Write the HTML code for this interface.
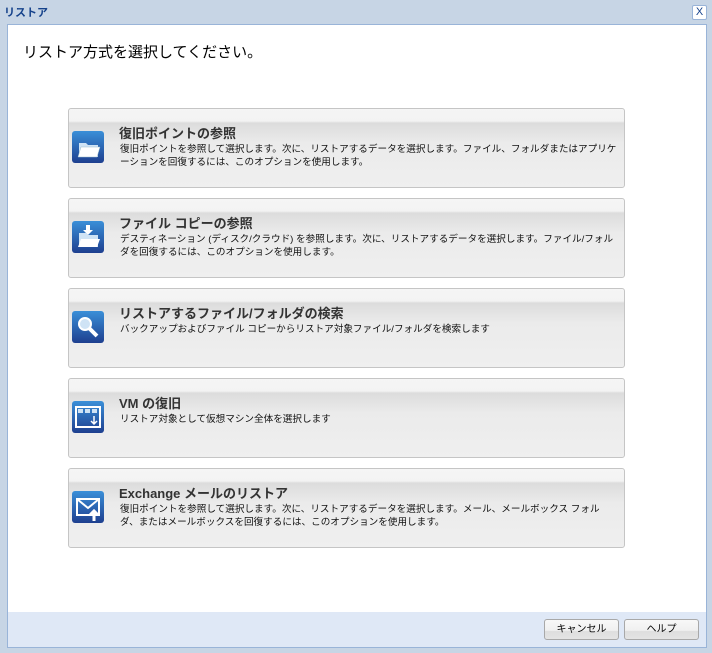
<!DOCTYPE html>
<html><head><meta charset="utf-8"><style>
*{margin:0;padding:0;box-sizing:border-box}
body{width:712px;height:653px;background:#c7d5e5;font-family:"Liberation Sans","Noto Sans CJK JP",sans-serif;position:relative;overflow:hidden}
.title{position:absolute;left:4px;top:4px;font-size:11px;font-weight:bold;color:#15428b}
.close{position:absolute;left:692px;top:5px;width:15px;height:15px;border:1px solid #99b4d8;background:#fff;color:#15428b;font-size:11px;text-align:center;line-height:13px;border-radius:2px}
.inner{position:absolute;left:7px;top:24px;width:700px;height:624px;border:1px solid #99b4d8;background:#dfe8f6}
.white{position:absolute;left:0;top:0;width:698px;height:587px;background:#fff}
.head{position:absolute;left:15px;top:16px;font-size:15px;color:#000}
.card{position:absolute;left:60px;width:557px;height:80px;border:1px solid #c5c5c5;border-radius:3px;background:linear-gradient(#f5f5f5 0,#f3f3f3 12px,#dcdcdc 14px,#ebebeb 34px,#efefef 100%)}
.icon{position:absolute;left:3px;top:22px;width:32px;height:32px;border-radius:3px;background:linear-gradient(#3a8fd8,#1e3f8f)}
.t{position:absolute;left:50px;top:14px;font-size:13px;font-weight:bold;color:#333}
.d{position:absolute;left:51px;top:34px;width:497px;font-size:9.6px;line-height:13px;color:#111}
.btn{position:absolute;top:594px;width:75px;height:21px;border:1px solid #a8a8a8;border-radius:3px;background:linear-gradient(#f8f8f8 0,#f0f0f0 55%,#dedede 60%,#e4e4e4);font-size:10px;text-align:center;line-height:19px;color:#000}
</style></head><body>
<div class="title">リストア</div>
<div class="close">X</div>
<div class="inner">
<div class="white">
<div class="head">リストア方式を選択してください。</div>
<div class="card" style="top:83px"><div class="icon"><svg width="32" height="32"><path d="M7 12h7l2 2h10v12H7z" fill="#cfe3f5"/><path d="M9 16h19l-3 10H6z" fill="#fff" stroke="#9bc" stroke-width=".5"/></svg></div><div class="t">復旧ポイントの参照</div><div class="d">復旧ポイントを参照して選択します。次に、リストアするデータを選択します。ファイル、フォルダまたはアプリケーションを回復するには、このオプションを使用します。</div></div>
<div class="card" style="top:173px"><div class="icon"><svg width="32" height="32"><path d="M7 12h7l2 2h10v12H7z" fill="#cfe3f5"/><path d="M9 18h19l-3 8H6z" fill="#fff"/><path d="M14 4h4v5h3l-5 5-5-5h3z" fill="#fff"/></svg></div><div class="t">ファイル コピーの参照</div><div class="d">デスティネーション (ディスク/クラウド) を参照します。次に、リストアするデータを選択します。ファイル/フォルダを回復するには、このオプションを使用します。</div></div>
<div class="card" style="top:263px"><div class="icon"><svg width="32" height="32"><circle cx="13" cy="13" r="6" fill="#cfe3f5" stroke="#fff" stroke-width="2"/><path d="M17 17l8 8" stroke="#fff" stroke-width="4"/></svg></div><div class="t">リストアするファイル/フォルダの検索</div><div class="d">バックアップおよびファイル コピーからリストア対象ファイル/フォルダを検索します</div></div>
<div class="card" style="top:353px"><div class="icon"><svg width="32" height="32"><rect x="4" y="6" width="24" height="20" fill="none" stroke="#fff" stroke-width="2"/><rect x="6" y="8" width="5" height="4" fill="#cfe3f5"/><rect x="13" y="8" width="5" height="4" fill="#cfe3f5"/><rect x="20" y="8" width="5" height="4" fill="#cfe3f5"/><path d="M22 15v7M19 20l3 3 3-3" stroke="#fff" fill="none" stroke-width="1.5"/></svg></div><div class="t">VM の復旧</div><div class="d">リストア対象として仮想マシン全体を選択します</div></div>
<div class="card" style="top:443px"><div class="icon"><svg width="32" height="32"><rect x="5" y="8" width="22" height="16" fill="none" stroke="#fff" stroke-width="2"/><path d="M5 8l11 9 11-9" stroke="#fff" fill="none" stroke-width="2"/><path d="M22 30v-9M18 24l4-4 4 4" stroke="#fff" fill="none" stroke-width="3"/></svg></div><div class="t">Exchange メールのリストア</div><div class="d">復旧ポイントを参照して選択します。次に、リストアするデータを選択します。メール、メールボックス フォルダ、またはメールボックスを回復するには、このオプションを使用します。</div></div>
</div>
<div class="btn" style="left:536px">キャンセル</div>
<div class="btn" style="left:616px">ヘルプ</div>
</div>
</body></html>
